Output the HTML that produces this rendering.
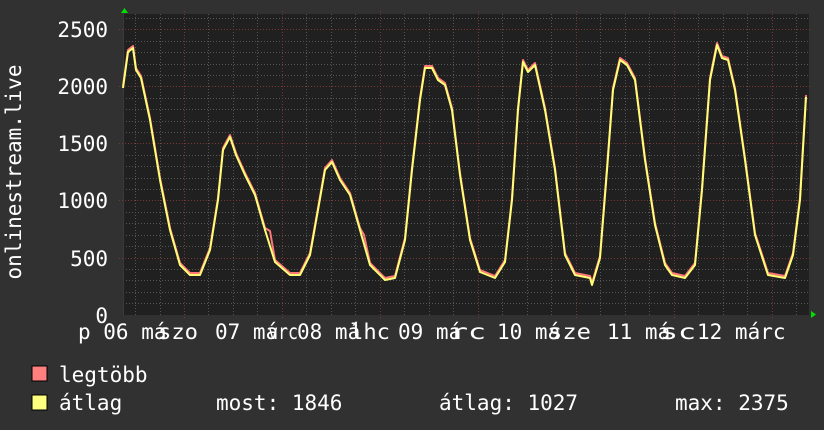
<!DOCTYPE html>
<html><head><meta charset="utf-8"><style>
html,body{margin:0;padding:0;background:#313131;}
body{width:824px;height:430px;overflow:hidden;position:relative;font-family:"DejaVu Sans Mono","Liberation Mono",monospace;color:#fff;}
svg{position:absolute;left:0;top:0}
</style></head><body>
<svg width="824" height="430" viewBox="0 0 824 430" font-family="DejaVu Sans Mono, Liberation Mono, monospace" fill="#fff">
<rect x="0" y="0" width="824" height="430" fill="#313131"/>
<rect x="123" y="14" width="686" height="301" fill="#202020"/>
<g stroke="#555" stroke-width="1" stroke-dasharray="1,2">
<line x1="123" x2="809" y1="303.5" y2="303.5"/><line x1="123" x2="809" y1="292.5" y2="292.5"/><line x1="123" x2="809" y1="280.5" y2="280.5"/><line x1="123" x2="809" y1="269.5" y2="269.5"/>
<line x1="123" x2="809" y1="246.5" y2="246.5"/><line x1="123" x2="809" y1="235.5" y2="235.5"/><line x1="123" x2="809" y1="223.5" y2="223.5"/><line x1="123" x2="809" y1="212.5" y2="212.5"/>
<line x1="123" x2="809" y1="189.5" y2="189.5"/><line x1="123" x2="809" y1="178.5" y2="178.5"/><line x1="123" x2="809" y1="166.5" y2="166.5"/><line x1="123" x2="809" y1="155.5" y2="155.5"/>
<line x1="123" x2="809" y1="132.5" y2="132.5"/><line x1="123" x2="809" y1="121.5" y2="121.5"/><line x1="123" x2="809" y1="109.5" y2="109.5"/><line x1="123" x2="809" y1="98.5" y2="98.5"/>
<line x1="123" x2="809" y1="75.5" y2="75.5"/><line x1="123" x2="809" y1="64.5" y2="64.5"/><line x1="123" x2="809" y1="52.5" y2="52.5"/><line x1="123" x2="809" y1="41.5" y2="41.5"/>
<line x1="123" x2="809" y1="18.5" y2="18.5"/>
<line y1="14" y2="315" x1="135.5" x2="135.5"/><line y1="14" y2="315" x1="160.5" x2="160.5"/><line y1="14" y2="315" x1="208.5" x2="208.5"/><line y1="14" y2="315" x1="233.5" x2="233.5"/><line y1="14" y2="315" x1="257.5" x2="257.5"/>
<line y1="14" y2="315" x1="306.5" x2="306.5"/><line y1="14" y2="315" x1="331.5" x2="331.5"/><line y1="14" y2="315" x1="355.5" x2="355.5"/>
<line y1="14" y2="315" x1="404.5" x2="404.5"/><line y1="14" y2="315" x1="429.5" x2="429.5"/><line y1="14" y2="315" x1="453.5" x2="453.5"/>
<line y1="14" y2="315" x1="502.5" x2="502.5"/><line y1="14" y2="315" x1="527.5" x2="527.5"/><line y1="14" y2="315" x1="551.5" x2="551.5"/>
<line y1="14" y2="315" x1="600.5" x2="600.5"/><line y1="14" y2="315" x1="625.5" x2="625.5"/><line y1="14" y2="315" x1="649.5" x2="649.5"/>
<line y1="14" y2="315" x1="698.5" x2="698.5"/><line y1="14" y2="315" x1="723.5" x2="723.5"/><line y1="14" y2="315" x1="747.5" x2="747.5"/><line y1="14" y2="315" x1="796.5" x2="796.5"/>
</g>
<g stroke="#7a3535" stroke-width="1" stroke-dasharray="1,2">
<line x1="119" x2="812" y1="29.5" y2="29.5"/><line x1="119" x2="812" y1="86.5" y2="86.5"/><line x1="119" x2="812" y1="143.5" y2="143.5"/><line x1="119" x2="812" y1="200.5" y2="200.5"/><line x1="119" x2="812" y1="258.5" y2="258.5"/>
<line y1="11" y2="318" x1="184.5" x2="184.5"/><line y1="11" y2="318" x1="282.5" x2="282.5"/><line y1="11" y2="318" x1="380.5" x2="380.5"/><line y1="11" y2="318" x1="478.5" x2="478.5"/><line y1="11" y2="318" x1="576.5" x2="576.5"/><line y1="11" y2="318" x1="674.5" x2="674.5"/><line y1="11" y2="318" x1="772.5" x2="772.5"/>
</g>
<line x1="123.5" y1="14" x2="123.5" y2="316" stroke="#3a3a3a"/>
<polygon points="121,13 128,13 124.5,8" fill="#00e000"/>
<polygon points="811,311 811,318 816,314.5" fill="#00e000"/>
<polyline fill="none" stroke="#ff7777" stroke-width="2" stroke-linejoin="round" points="123,86 128,50 133,46 136,68 141,76 150,118 160,178 170,228 180,263 190,273 200,273 210,248 218,198 223,148 230,135 236,153 245,173 255,193 265,228 270,231 275,260 290,273 300,273 310,253 318,208 325,168 332,160 340,178 350,193 360,228 364,235 370,263 385,278 395,276 405,238 412,168 420,98 425,66 432,66 438,78 445,83 452,108 460,173 470,238 480,270 495,276 505,260 512,198 518,108 523,60 528,70 535,63 545,108 555,168 565,253 575,273 590,276 592,283 600,256 607,168 613,88 620,58 627,63 635,78 645,158 655,223 665,263 672,273 685,276 695,263 702,188 710,78 717,43 722,56 728,58 735,88 745,158 755,233 768,273 785,276 793,253 800,198 806,95"/>
<polyline fill="none" stroke="#ffff77" stroke-width="2" stroke-linejoin="round" points="123,88 128,52 133,48 136,70 141,78 150,120 160,180 170,230 180,265 190,275 200,275 210,250 218,200 223,150 230,137 236,155 245,175 255,195 265,230 275,262 290,275 300,275 310,255 318,210 325,170 332,162 340,180 350,195 360,230 370,265 385,280 395,278 405,240 412,170 420,100 425,68 432,68 438,80 445,85 452,110 460,175 470,240 480,272 495,278 505,262 512,200 518,110 523,62 528,72 535,65 545,110 555,170 565,255 575,275 590,278 592,285 600,258 607,170 613,90 620,60 627,65 635,80 645,160 655,225 665,265 672,275 685,278 695,265 702,190 710,80 717,45 722,58 728,60 735,90 745,160 755,235 768,275 785,278 793,255 800,200 806,97"/>
<g font-size="21" text-anchor="end">
<text x="108" y="37">2500</text><text x="108" y="94">2000</text><text x="108" y="151">1500</text><text x="108" y="208">1000</text><text x="108" y="266">500</text><text x="108" y="323">0</text>
</g>
<text transform="translate(21,172) rotate(-90)" font-size="21" text-anchor="middle">onlinestream.live</text>
<g font-size="21">
<text x="78" y="339">p 06 má</text><text x="158" y="339" textLength="40" lengthAdjust="spacingAndGlyphs">szo</text>
<text x="215" y="339">07 má</text><text x="268" y="339" textLength="30" lengthAdjust="spacingAndGlyphs">vrc</text><text x="297" y="339">08 má</text><text x="350" y="339" textLength="40" lengthAdjust="spacingAndGlyphs">lhc</text>
<text x="398" y="339">09 má</text><text x="450" y="339" textLength="36" lengthAdjust="spacingAndGlyphs">rc</text><text x="497" y="339">10 má</text><text x="548" y="339" textLength="43" lengthAdjust="spacingAndGlyphs">sze</text>
<text x="607" y="339">11 má</text><text x="660" y="339" textLength="36" lengthAdjust="spacingAndGlyphs">sc</text><text x="697" y="339">12 márc</text>
</g>
<rect x="32" y="366" width="15" height="15" fill="#ff7f7f" stroke="#000"/>
<rect x="32" y="395" width="15" height="15" fill="#ffff7f" stroke="#000"/>
<g font-size="21">
<text x="59" y="382">legtöbb</text>
<text x="59" y="410">átlag</text>
<text x="216" y="410">most: 1846</text>
<text x="439" y="410">átlag: 1027</text>
<text x="675" y="410">max: 2375</text>
</g>
</svg>
</body></html>
